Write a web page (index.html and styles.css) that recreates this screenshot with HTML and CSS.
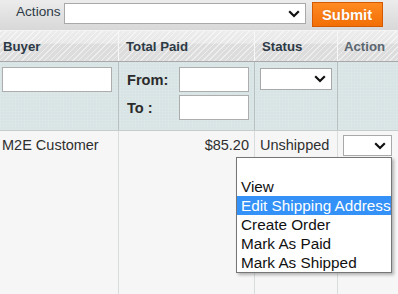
FILE: index.html
```html
<!DOCTYPE html>
<html>
<head>
<meta charset="utf-8">
<link rel="stylesheet" href="styles.css">
</head>
<body>
<div class="page">
  <div class="toolbar">
    <span class="tb-label">Actions</span>
    <div class="select sel-actions">
      <svg class="chev" width="12" height="8" viewBox="0 0 12 8"><polyline points="1.2,1.2 6,6 10.8,1.2" fill="none" stroke="#111" stroke-width="2.2"/></svg>
    </div>
    <button class="submit">Submit</button>
  </div>

  <div class="row head">
    <div class="cell h-buyer">Buyer</div>
    <div class="cell h-total">Total Paid</div>
    <div class="cell h-status">Status</div>
    <div class="cell h-action">Action</div>
  </div>

  <div class="row filter">
    <div class="cell f-buyer"><div class="input in-buyer"></div></div>
    <div class="cell f-range">
      <div class="range-line"><span class="range-label">From:</span><div class="input in-range"></div></div>
      <div class="range-line"><span class="range-label">To :</span><div class="input in-range"></div></div>
    </div>
    <div class="cell f-status">
      <div class="select sel-status">
        <svg class="chev" width="12" height="8" viewBox="0 0 12 8"><polyline points="1.2,1.2 6,6 10.8,1.2" fill="none" stroke="#111" stroke-width="2.2"/></svg>
      </div>
    </div>
    <div class="cell"></div>
  </div>

  <div class="row data">
    <div class="cell d-buyer">M2E Customer</div>
    <div class="cell d-total">$85.20</div>
    <div class="cell d-status">Unshipped</div>
    <div class="cell d-action">
      <div class="select sel-action">
        <svg class="chev" width="12" height="8" viewBox="0 0 12 8"><polyline points="1.2,1.2 6,6 10.8,1.2" fill="none" stroke="#111" stroke-width="2.2"/></svg>
      </div>
    </div>
  </div>

  <ul class="popup">
    <li class="opt"></li>
    <li class="opt">View</li>
    <li class="opt sel">Edit Shipping Address</li>
    <li class="opt">Create Order</li>
    <li class="opt">Mark As Paid</li>
    <li class="opt">Mark As Shipped</li>
  </ul>
</div>
</body>
</html>
```

FILE: styles.css
```css
html, body {
  margin: 0;
  padding: 0;
  width: 398px;
  height: 294px;
  overflow: hidden;
  background: #f6f6f6;
  font-family: "Liberation Sans", Arial, sans-serif;
}

.page {
  position: relative;
  height: 294px;
  display: flex;
  flex-direction: column;
}

/* toolbar */
.toolbar {
  height: 30px;
  border-bottom: 1px solid #f4f4f4;
  background: linear-gradient(#ececec, #d8d8d8);
  display: flex;
  align-items: flex-start;
  padding-left: 16px;
  box-sizing: content-box;
}
.tb-label {
  margin-top: 4px;
  font-size: 13.6px;
  color: #2e3b47;
}
.select {
  box-sizing: border-box;
  background: #fff;
  border: 1px solid #a9a9a9;
  display: flex;
  align-items: center;
  justify-content: flex-end;
  padding-right: 5px;
}
.chev { display: block; }
.sel-actions {
  margin-top: 3px;
  margin-left: 3px;
  width: 242px;
  height: 21px;
}
.submit {
  margin-top: 2px;
  margin-left: 6px;
  width: 71px;
  height: 25px;
  padding: 0;
  border: 1px solid #d45a00;
  background: linear-gradient(#ff8a22, #f26f05);
  color: #fff;
  font-family: "Liberation Sans", Arial, sans-serif;
  font-weight: bold;
  font-size: 14.8px;
  text-shadow: 0 0 1px rgba(160, 60, 0, 0.4);
}

/* grid rows */
.row {
  display: grid;
  grid-template-columns: 119px 136px 83px 1fr;
}
.cell {
  box-sizing: border-box;
  border-right: 1px solid #d8dcdd;
}
.cell:last-child { border-right: none; }

.head {
  height: 31px;
  border-bottom: 1px solid #a9a9a9;
  box-sizing: border-box;
  background:
    repeating-linear-gradient(135deg, rgba(255,255,255,0.5) 0 1px, rgba(255,255,255,0) 1px 4px),
    linear-gradient(#ececec 0, #e8e8e8 40%, #dcdcdc 45%, #dddddd 100%);
  font-size: 13.2px;
  font-weight: bold;
  color: #2d3a46;
}
.head .cell {
  border-right-color: #f7f7f7;
  display: flex;
  align-items: center;
}
.h-buyer { padding-left: 3px; }
.h-total { padding-left: 7px; }
.h-status { padding-left: 7px; }
.h-action { padding-left: 6px; color: #5b6670; }

.filter {
  height: 69px;
  border-bottom: 1px solid #c6cbcc;
  box-sizing: border-box;
  background:
    repeating-linear-gradient(0deg, rgba(255,255,255,0.09) 0 1px, rgba(255,255,255,0) 1px 3px),
    repeating-linear-gradient(90deg, rgba(255,255,255,0.09) 0 1px, rgba(255,255,255,0) 1px 3px),
    #d7e3e4;
}
.filter .cell {
  border-right-color: #b9c0c1;
  padding-top: 5px;
}
.input {
  box-sizing: border-box;
  background: #fff;
  border: 1px solid #adadad;
  height: 25px;
}
.f-buyer { padding-left: 2px; }
.in-buyer { width: 110px; }
.f-range {
  padding-left: 8px;
  display: flex;
  flex-direction: column;
  gap: 3px;
}
.range-line {
  display: flex;
  align-items: center;
}
.range-label {
  width: 52px;
  font-size: 14.6px;
  font-weight: bold;
  color: #2b2b2b;
}
.in-range { width: 70px; }
.f-status { padding-left: 5px; }
.filter .f-status { padding-top: 6px; }
.sel-status {
  width: 72px;
  height: 22px;
}

.data {
  flex: 1;
  font-size: 14.5px;
  color: #2f2f2f;
  line-height: 17px;
}
.data .cell { padding-top: 6px; }
.d-buyer { padding-left: 2px; }
.d-total { text-align: right; padding-right: 5px; }
.d-status { padding-left: 5px; }
.d-action { padding-left: 5px; }
.data .d-action { padding-top: 4px; }
.sel-action {
  width: 49px;
  height: 21px;
}

/* open select popup (overlay) */
.popup {
  position: absolute;
  left: 236px;
  top: 157px;
  width: 156px;
  margin: 0;
  padding: 0;
  list-style: none;
  box-sizing: border-box;
  background: #fff;
  border: 1px solid #767676;
  box-shadow: 2px 2px 3px rgba(0, 0, 0, 0.28);
  font-size: 15.3px;
  color: #111;
}
.opt {
  height: 19px;
  line-height: 19px;
  padding-left: 4px;
  white-space: nowrap;
}
.opt.sel {
  background: #3391f7;
  color: #fff;
}
```
